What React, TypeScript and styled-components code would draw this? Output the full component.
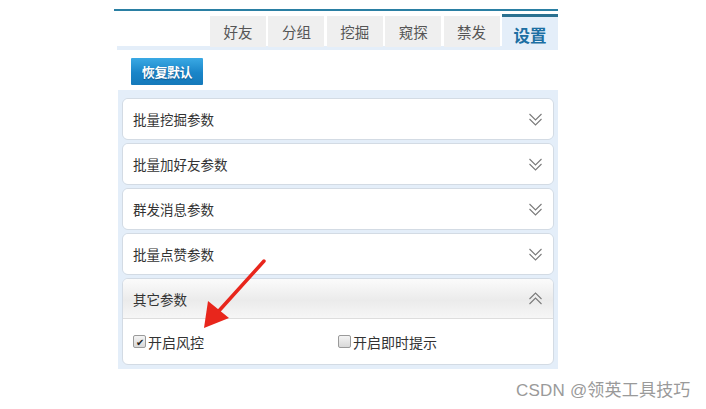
import styled, { createGlobalStyle } from "styled-components"

const GlobalStyle = createGlobalStyle`
  html, body {
    margin: 0;
    padding: 0;
    background: #ffffff;
  }
  body {
    font-family: "Noto Sans CJK SC", "Noto Sans", sans-serif;
  }
`

const Page = styled.div`
  position: relative;
  width: 706px;
  height: 409px;
  padding: 9px 0 0 114px;
  box-sizing: border-box;
  overflow: hidden;
`

const Frame = styled.div`
  width: 444px;
  border-top: 2px solid #2a7fa3;
`

const TabBar = styled.div`
  display: flex;
  justify-content: flex-end;
  align-items: flex-start;
  gap: 2.4px;
  height: 35px;
  padding-top: 2px;
  box-sizing: border-box;
`

const Tab = styled.div<{ $active?: boolean }>`
  display: flex;
  align-items: center;
  justify-content: center;
  width: 56px;
  height: ${({ $active }) => ($active ? "34px" : "31px")};
  margin-top: ${({ $active }) => ($active ? "1px" : "3px")};
  box-sizing: border-box;
  background: ${({ $active }) => ($active ? "#e4eef9" : "#efefef")};
  border-top: ${({ $active }) => ($active ? "3px solid #2a7090" : "none")};
  color: ${({ $active }) => ($active ? "#1c6fa3" : "#555555")};
  font-size: ${({ $active }) => ($active ? "16.5px" : "14.5px")};
  font-weight: ${({ $active }) => ($active ? 700 : 400)};
  padding-top: ${({ $active }) => ($active ? "4px" : "0")};
`

const Strip = styled.div`
  height: 4px;
  margin-left: 3px;
  background: #e4eef9;
`

const Toolbar = styled.div`
  display: flex;
  padding: 8px 0 5px 17px;
`

const ResetButton = styled.button`
  width: 72px;
  height: 27px;
  padding: 0;
  border: none;
  border-radius: 1px;
  background: linear-gradient(#3aa9e4, #1a85c8 55%, #1579ba);
  color: #ffffff;
  font-family: "Noto Sans CJK SC", sans-serif;
  font-size: 13px;
  font-weight: 700;
  letter-spacing: -0.4px;
  text-shadow: 0 1px 1px rgba(0, 40, 80, 0.5);
  cursor: pointer;
`

const Panel = styled.div`
  display: flex;
  flex-direction: column;
  gap: 3px;
  margin-left: 4px;
  width: 440px;
  padding: 8px 4px 4px;
  box-sizing: border-box;
  background: #e4eef9;
`

const Item = styled.div`
  border: 1px solid #d3dbe4;
  border-radius: 6px;
  background: #ffffff;
  overflow: hidden;
`

const Header = styled.div<{ $open?: boolean }>`
  display: flex;
  align-items: center;
  justify-content: space-between;
  height: ${({ $open }) => ($open ? "39px" : "40px")};
  padding: 0 10px 0 10px;
  background: ${({ $open }) =>
    $open ? "linear-gradient(#fbfbfb, #ebebeb 55%, #f6f6f6)" : "#ffffff"};
  border-bottom: ${({ $open }) => ($open ? "1px solid #dddddd" : "none")};
  color: #333333;
  font-size: 13.5px;
`

const Body = styled.div`
  display: flex;
  align-items: center;
  height: 45px;
  padding: 0 10px;
  box-sizing: border-box;
`

const Check = styled.label`
  display: flex;
  align-items: center;
  width: 205px;
  color: #333333;
  font-size: 14px;
`

const Box = styled.span`
  display: inline-flex;
  align-items: center;
  justify-content: center;
  width: 11px;
  height: 11px;
  margin-right: 2px;
  border: 1px solid #9a9a9a;
  border-radius: 2px;
  background: linear-gradient(#f4f4f4, #d8d8d8);
  color: #222;
  font-size: 10px;
  line-height: 1;
`

const Arrow = styled.svg`
  position: absolute;
  left: 195px;
  top: 255px;
`

const Watermark = styled.div`
  position: absolute;
  left: 516px;
  top: 376px;
  color: #9a9a9a;
  font-family: "Liberation Sans", "Noto Sans CJK SC", sans-serif;
  font-size: 17px;
  letter-spacing: 0.2px;
`

function Chevron({ up }: { up?: boolean }) {
  const d = up
    ? "M1 7 L7 1 L13 7 M1 12 L7 6 L13 12"
    : "M1 1 L7 7 L13 1 M1 6 L7 12 L13 6"
  return (
    <svg width="15" height="13" viewBox="0 0 14 13">
      <path d={d} fill="none" stroke="#7a7a7a" strokeWidth="1.1" />
    </svg>
  )
}

const sections = ["批量挖掘参数", "批量加好友参数", "群发消息参数", "批量点赞参数"]
const tabs = ["好友", "分组", "挖掘", "窥探", "禁发"]

export default function App() {
  return (
    <>
      <GlobalStyle />
      <Page>
        <Frame>
          <TabBar>
            {tabs.map((t) => (
              <Tab key={t}>{t}</Tab>
            ))}
            <Tab $active>设置</Tab>
          </TabBar>
          <Strip />
          <Toolbar>
            <ResetButton type="button">恢复默认</ResetButton>
          </Toolbar>
          <Panel>
            {sections.map((s) => (
              <Item key={s}>
                <Header>
                  {s}
                  <Chevron />
                </Header>
              </Item>
            ))}
            <Item>
              <Header $open>
                其它参数
                <Chevron up />
              </Header>
              <Body>
                <Check>
                  <Box>✔</Box>开启风控
                </Check>
                <Check>
                  <Box />开启即时提示
                </Check>
              </Body>
            </Item>
          </Panel>
        </Frame>
        <Arrow width="80" height="80" viewBox="0 0 80 80">
          <path d="M69 6 L22 58" stroke="#e8261c" strokeWidth="3.5" strokeLinecap="round" />
          <path d="M9 73 L13 46 L34 63 Z" fill="#e8261c" />
        </Arrow>
        <Watermark>CSDN @领英工具技巧</Watermark>
      </Page>
    </>
  )
}
